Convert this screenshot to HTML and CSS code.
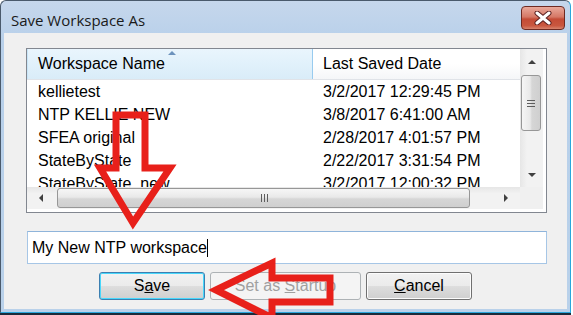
FILE: index.html
```html
<!DOCTYPE html>
<html>
<head>
<meta charset="utf-8">
<link rel="stylesheet" href="styles.css">
</head>
<body>
<div class="window">
  <div class="titlebar">
    <span class="title">Save Workspace As</span>
    <div class="close">
      <svg width="20" height="14" viewBox="0 0 20 14"><path d="M4 2 L16 12 M16 2 L4 12" stroke="#5a2020" stroke-width="5" stroke-linecap="round"/><path d="M4 2 L16 12 M16 2 L4 12" stroke="#ffffff" stroke-width="3" stroke-linecap="round"/></svg>
    </div>
  </div>
  <div class="client">
    <div class="listview">
      <div class="list-main">
        <div class="header">
          <div class="hcol hcol-name">Workspace Name<span class="sort"></span></div>
          <div class="hcol hcol-date">Last Saved Date</div>
        </div>
        <div class="rows">
          <div class="row"><span class="c1">kellietest</span><span class="c2">3/2/2017 12:29:45 PM</span></div>
          <div class="row"><span class="c1">NTP KELLIE NEW</span><span class="c2">3/8/2017 6:41:00 AM</span></div>
          <div class="row"><span class="c1">SFEA original</span><span class="c2">2/28/2017 4:01:57 PM</span></div>
          <div class="row"><span class="c1">StateByState</span><span class="c2">2/22/2017 3:31:54 PM</span></div>
          <div class="row"><span class="c1">StateByState_new</span><span class="c2">3/2/2017 12:00:32 PM</span></div>
        </div>
      </div>
      <div class="vscroll">
        <div class="sbtn"><span class="tri tri-up"></span></div>
        <div class="vtrack"><div class="vthumb"><span class="vgrip"></span></div></div>
        <div class="sbtn"><span class="tri tri-down"></span></div>
      </div>
      <div class="hscroll">
        <div class="hbtn"><span class="tri tri-left"></span></div>
        <div class="htrack"><div class="hthumb"><span class="hgrip"></span></div></div>
        <div class="hbtn"><span class="tri tri-right"></span></div>
      </div>
      <div class="corner"></div>
    </div>
    <div class="textbox"><span class="value">My New NTP workspace</span><span class="caret"></span></div>
    <div class="buttons">
      <div class="btn btn-default">S<u>a</u>ve</div>
      <div class="btn btn-wide btn-disabled">Set as&nbsp;<u>S</u>tartup</div>
      <div class="btn"><u>C</u>ancel</div>
    </div>
  </div>
</div>
<svg class="annot" width="573" height="315" viewBox="0 0 573 315">
  <polygon points="116,115 145,115 145,168 170,168 133,223 100,168 116,168" fill="none" stroke="#e8201a" stroke-width="7" stroke-linejoin="miter"/>
  <polygon points="216,290 272,263 272,278 330,278 330,302 272,302 272,318" fill="none" stroke="#e8201a" stroke-width="7" stroke-linejoin="miter"/>
</svg>
</body>
</html>
```
FILE: styles.css
```css
html, body {
  margin: 0;
  padding: 0;
}
body {
  width: 573px;
  height: 315px;
  overflow: hidden;
  background: #ffffff;
  position: relative;
  font-family: "Liberation Sans", Arial, sans-serif;
  font-size: 16px;
  color: #000;
}
.window {
  box-sizing: border-box;
  width: 571px;
  height: 313px;
  border: 1px solid #4a5a6c;
  border-bottom-color: #2aa6dc;
  border-right-color: #2aa6dc;
  border-radius: 6px 6px 0 0;
  padding: 0 3px 3px 3px;
  background: linear-gradient(#c6d7ec, #b8d0ea 40px, #b9d1ea);
  display: flex;
  flex-direction: column;
  box-shadow: 0 2px 0 #1b2b3a;
}
.titlebar {
  height: 32px;
  display: flex;
  align-items: flex-start;
  flex-shrink: 0;
}
.title {
  font-family: "Open Sans", "Noto Sans", sans-serif;
  font-size: 15px;
  color: #1a1a1a;
  padding-left: 7px;
  margin-top: 8px;
  line-height: 22px;
}
.close {
  margin-left: auto;
  margin-right: 2px;
  margin-top: 5px;
  width: 44px;
  height: 24px;
  box-sizing: border-box;
  border: 1px solid #6e2a22;
  border-radius: 4px;
  background: linear-gradient(#e9a99b, #d57866 45%, #c44b36 55%, #c9573f 85%, #d8836d);
  display: flex;
  align-items: center;
  justify-content: center;
}
.close svg { display: block; }
.client {
  flex: 1;
  background: #f0f0f0;
  padding: 15px 20px 0 22px;
  display: flex;
  flex-direction: column;
}
.listview {
  box-sizing: border-box;
  width: 521px;
  height: 165px;
  border: 1px solid #828790;
  background: #fff;
  padding: 0 3px 3px 0;
  display: grid;
  grid-template-columns: 493px 23px;
  grid-template-rows: 138px 22px;
}
.list-main {
  overflow: hidden;
}
.header {
  display: flex;
  height: 31px;
  box-sizing: border-box;
  border-bottom: 1px solid #e0e3e8;
}
.hcol {
  display: flex;
  align-items: center;
  box-sizing: border-box;
  height: 30px;
}
.hcol-name {
  width: 286px;
  padding-left: 10px;
  background: linear-gradient(#e9f5fd, #e1f1fb 50%, #d9ecf8);
  border-left: 1px solid #c9e6f8;
  border-right: 1px solid #98cbef;
  position: relative;
}
.hcol-date {
  width: 207px;
  padding-left: 10px;
  background: linear-gradient(#ffffff, #ffffff 50%, #f5f6f8);
}
.sort {
  position: absolute;
  left: 140px;
  top: 2px;
  width: 0;
  height: 0;
  border-left: 4px solid transparent;
  border-right: 4px solid transparent;
  border-bottom: 4px solid #6d93bd;
}
.row {
  display: flex;
  height: 23px;
  align-items: center;
}
.c1 {
  width: 286px;
  padding-left: 11px;
  box-sizing: border-box;
  white-space: nowrap;
}
.c2 {
  width: 207px;
  padding-left: 10px;
  box-sizing: border-box;
  white-space: nowrap;
}
.vscroll {
  background: linear-gradient(to right, #e6e6e6, #f2f2f2 30%, #f2f2f2);
  display: flex;
  flex-direction: column;
}
.sbtn {
  height: 25px;
  display: flex;
  align-items: center;
  justify-content: center;
  flex-shrink: 0;
}
.vtrack {
  flex: 1;
}
.vthumb {
  box-sizing: border-box;
  margin: 1px 2px 0 1px;
  height: 56px;
  border: 1px solid #979797;
  border-radius: 3px;
  background: linear-gradient(to right, #f6f6f6, #e9e9e9 45%, #d6d6d6 55%, #cfcfcf);
  display: flex;
  align-items: center;
  justify-content: center;
}
.vgrip {
  width: 8px;
  height: 7px;
  background: repeating-linear-gradient(#5d5d5d 0 1px, transparent 1px 3px);
}
.hscroll {
  background: linear-gradient(#e6e6e6, #f2f2f2 30%, #f2f2f2);
  display: flex;
}
.hbtn {
  width: 28px;
  display: flex;
  align-items: center;
  justify-content: center;
  flex-shrink: 0;
}
.htrack {
  flex: 1;
  display: flex;
  align-items: center;
}
.hthumb {
  box-sizing: border-box;
  margin-left: 2px;
  width: 413px;
  height: 20px;
  border: 1px solid #979797;
  border-radius: 3px;
  background: linear-gradient(#f6f6f6, #e9e9e9 45%, #d6d6d6 55%, #cfcfcf);
  display: flex;
  align-items: center;
  justify-content: center;
}
.hgrip {
  width: 7px;
  height: 8px;
  margin-left: 2px;
  background: repeating-linear-gradient(to right, #5d5d5d 0 1px, transparent 1px 3px);
}
.corner {
  background: #f0f0f0;
}
.tri {
  width: 0;
  height: 0;
  display: block;
}
.tri-up {
  border-left: 4px solid transparent;
  border-right: 4px solid transparent;
  border-bottom: 4px solid #404040;
}
.tri-down {
  border-left: 4px solid transparent;
  border-right: 4px solid transparent;
  border-top: 4px solid #404040;
}
.tri-left {
  border-top: 4px solid transparent;
  border-bottom: 4px solid transparent;
  border-right: 4px solid #404040;
}
.tri-right {
  border-top: 4px solid transparent;
  border-bottom: 4px solid transparent;
  border-left: 4px solid #404040;
}
.textbox {
  box-sizing: border-box;
  margin-top: 18px;
  margin-left: 1px;
  width: 520px;
  height: 33px;
  border: 1px solid #a6c6e6;
  border-top-color: #8fb4da;
  background: #fff;
  display: flex;
  align-items: center;
  padding-left: 4px;
}
.caret {
  width: 1px;
  height: 18px;
  background: #000;
}
.buttons {
  margin-top: 8px;
  display: flex;
  justify-content: center;
  gap: 5px;
  margin-right: -20px;
  margin-left: -22px;
}
.btn {
  box-sizing: border-box;
  width: 106px;
  height: 28px;
  border: 1px solid #707070;
  border-radius: 3px;
  background: linear-gradient(#f2f2f2, #ebebeb 48%, #dddddd 52%, #cfcfcf);
  display: flex;
  align-items: center;
  justify-content: center;
  box-shadow: inset 0 0 0 1px #fcfcfc;
}
.btn-wide {
  width: 151px;
}
.btn-default {
  border-color: #3c7fb1;
  box-shadow: inset 0 0 0 1px #48d7fb;
}
.btn-disabled {
  border-color: #adb2b5;
  background: #f4f4f4;
  color: #a0a0a0;
  box-shadow: none;
}
.annot {
  position: absolute;
  left: 0;
  top: 0;
  pointer-events: none;
}
```
